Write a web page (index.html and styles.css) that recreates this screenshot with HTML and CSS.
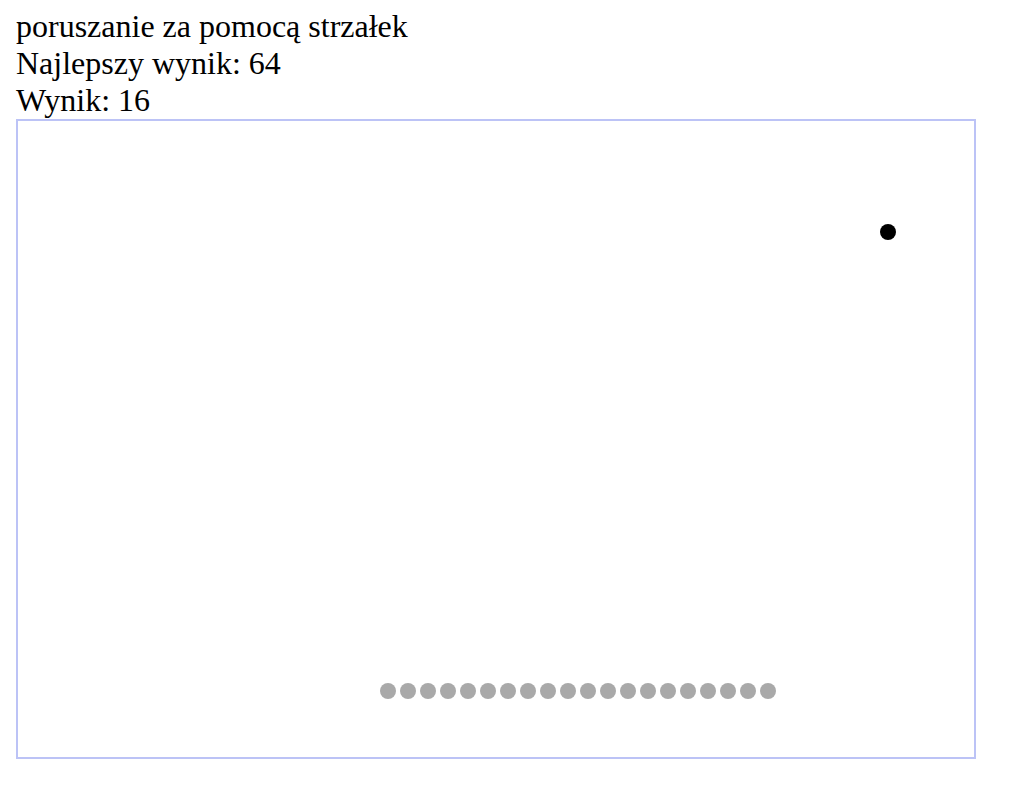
FILE: index.html
```html
<!DOCTYPE html>
<html lang="pl">
<head>
<meta charset="utf-8">
<title>Snake</title>
<link rel="stylesheet" href="styles.css">
</head>
<body>
<div class="info">
  <div class="line">poruszanie za pomocą strzałek</div>
  <div class="line">Najlepszy wynik: 64</div>
  <div class="line">Wynik: 16</div>
</div>
<div class="board">
  <div class="food"></div>
  <div class="snake">
    <span class="seg"></span><span class="seg"></span><span class="seg"></span><span class="seg"></span><span class="seg"></span>
    <span class="seg"></span><span class="seg"></span><span class="seg"></span><span class="seg"></span><span class="seg"></span>
    <span class="seg"></span><span class="seg"></span><span class="seg"></span><span class="seg"></span><span class="seg"></span>
    <span class="seg"></span><span class="seg"></span><span class="seg"></span><span class="seg"></span><span class="seg"></span>
  </div>
</div>
</body>
</html>
```
FILE: styles.css
```css
html, body {
  margin: 0;
  padding: 0;
  background: #ffffff;
}
body {
  padding: 8px 16px 16px 16px;
  font-family: "Liberation Serif", "Times New Roman", serif;
  font-size: 32px;
  line-height: 37px;
  color: #000;
}
.info {
  display: flex;
  flex-direction: column;
}
.board {
  position: relative;
  box-sizing: border-box;
  width: 960px;
  height: 640px;
  border: 2px solid #bcc3f6;
  background: #fff;
}
.food {
  position: absolute;
  left: 862px;
  top: 103px;
  width: 16px;
  height: 16px;
  border-radius: 50%;
  background: #000;
  filter: blur(0.6px);
}
.snake {
  position: absolute;
  left: 362px;
  top: 562px;
  display: flex;
  gap: 4px;
}
.seg {
  width: 16px;
  height: 16px;
  border-radius: 50%;
  background: #a9a9a9;
  filter: blur(0.6px);
}
```
